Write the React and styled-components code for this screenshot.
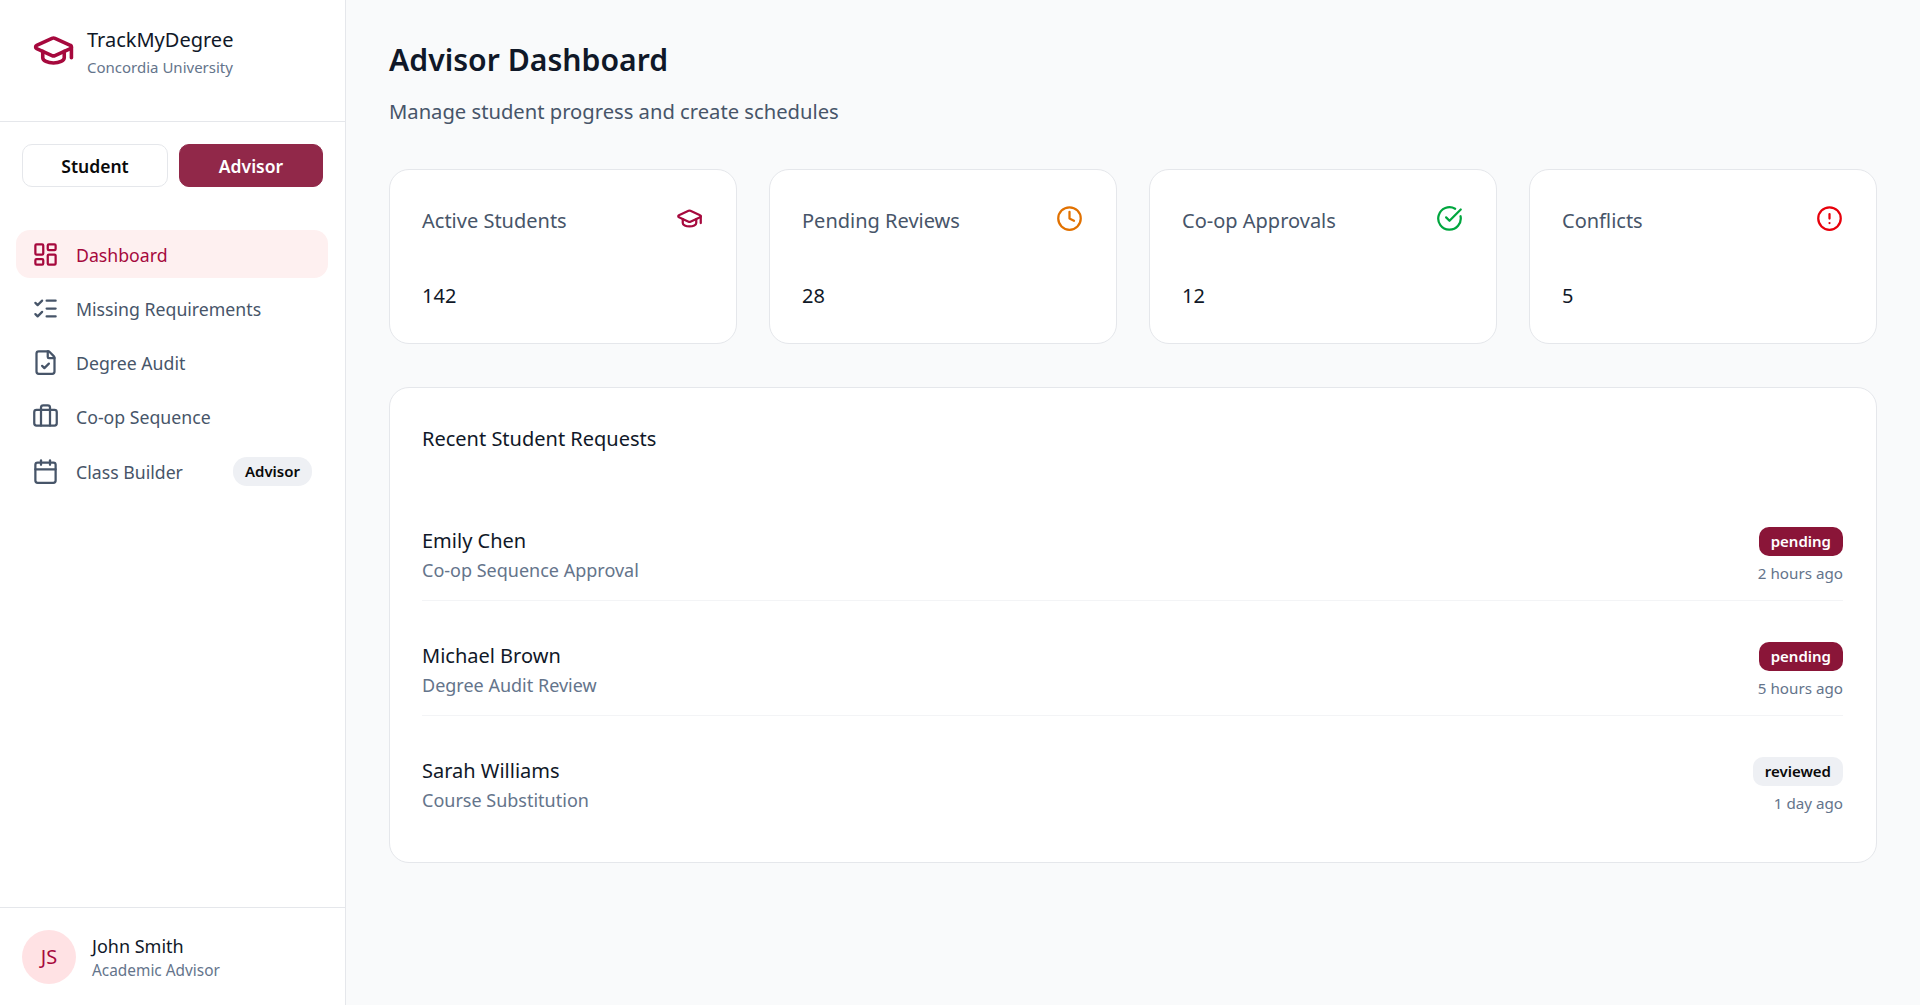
import React from 'react';
import styled, { createGlobalStyle } from 'styled-components';
import {
  GraduationCap,
  LayoutDashboard,
  ListChecks,
  FileCheck,
  Briefcase,
  Calendar,
  Clock,
  CircleCheckBig,
  CircleAlert,
} from 'lucide-react';

const GlobalStyle = createGlobalStyle`
  * {
    box-sizing: border-box;
  }

  body {
    margin: 0;
    background: #f9fafb;
    color: #0a0a0a;
    font-family: "Noto Sans", "Open Sans", sans-serif;
  }
`;

const Layout = styled.div`
  display: flex;
  height: 1005px;
  overflow: hidden;
`;

const Sidebar = styled.aside`
  width: 346px;
  flex-shrink: 0;
  display: flex;
  flex-direction: column;
  background: #fff;
  border-right: 1px solid #e5e7eb;
`;

const Brand = styled.div`
  height: 122px;
  display: flex;
  align-items: flex-start;
  gap: 12px;
  padding: 26px 32px 0;
  border-bottom: 1px solid #e5e7eb;
`;

const BrandIcon = styled.div`
  display: flex;
  padding-top: 3px;
  color: #a6093d;
`;

const BrandName = styled.div`
  font-size: 20px;
  line-height: 28px;
  color: #101828;
`;

const BrandSub = styled.div`
  margin-top: 3px;
  font-size: 15px;
  line-height: 20px;
  color: #64748b;
`;

const RoleSwitch = styled.div`
  display: grid;
  grid-template-columns: 146fr 144fr;
  gap: 11px;
  padding: 22px 22px 0;
`;

const RoleButton = styled.div`
  height: 43px;
  display: flex;
  align-items: center;
  justify-content: center;
  font-size: 17.5px;
  font-weight: 600;
  border-radius: 10px;
  color: ${({ active }) => (active ? '#fff' : '#0a0a0a')};
  background: ${({ active }) => (active ? '#912849' : '#fff')};
  border: 1px solid ${({ active }) => (active ? '#912849' : '#e5e7eb')};
`;

const Nav = styled.nav`
  flex: 1;
  display: flex;
  flex-direction: column;
  gap: 6.25px;
  padding: 43px 17px 0 16px;
`;

const NavItem = styled.div`
  height: 48px;
  display: flex;
  align-items: center;
  gap: 17px;
  padding: 0 16px;
  border-radius: 14px;
  font-size: 17.7px;
  color: ${({ active }) => (active ? '#a6093d' : '#475569')};
  background: ${({ active }) => (active ? '#fef0f0' : 'transparent')};
`;

const NavLabel = styled.span`
  flex: 1;
  padding-top: 1px;
`;

const NavBadge = styled.span`
  padding: 4px 12px;
  border-radius: 14px;
  background: #eef0f4;
  color: #0a0a0a;
  font-size: 15px;
  line-height: 21px;
  font-weight: 600;
`;

const UserBar = styled.div`
  height: 98px;
  display: flex;
  align-items: center;
  gap: 16px;
  padding: 0 22px;
  border-top: 1px solid #e5e7eb;
`;

const Avatar = styled.div`
  width: 54px;
  height: 54px;
  display: flex;
  align-items: center;
  justify-content: center;
  border-radius: 50%;
  background: #ffe2e4;
  color: #a6093d;
  font-size: 20px;
`;

const UserInfo = styled.div`
  padding-top: 2px;
`;

const UserName = styled.div`
  font-size: 18px;
  line-height: 24px;
  color: #101828;
`;

const UserRole = styled.div`
  margin-top: 2px;
  font-size: 15.4px;
  line-height: 22px;
  color: #64748b;
`;

const Main = styled.main`
  flex: 1;
  padding: 37px 43px;
`;

const Title = styled.h1`
  margin: 0;
  font-size: 30.2px;
  line-height: 45px;
  font-weight: 600;
  color: #101828;
`;

const Subtitle = styled.p`
  margin: 14px 0 0;
  font-size: 20.2px;
  line-height: 30px;
  color: #475569;
`;

const Stats = styled.section`
  display: grid;
  grid-template-columns: repeat(4, 1fr);
  gap: 32px;
  margin-top: 43px;
`;

const Card = styled.div`
  background: #fff;
  border: 1px solid #e5e7eb;
  border-radius: 20px;
`;

const StatCard = styled(Card)`
  height: 175px;
  padding: 35px 33px 0 32px;
`;

const StatHead = styled.div`
  display: flex;
  justify-content: space-between;
  align-items: flex-start;
`;

const StatLabel = styled.div`
  padding-top: 2px;
  font-size: 20px;
  line-height: 28px;
  color: #475569;
`;

const StatIcon = styled.div`
  display: flex;
  color: ${({ color }) => color};
`;

const StatValue = styled.div`
  margin-top: 47px;
  font-size: 20px;
  line-height: 28px;
  color: #101828;
`;

const RequestsCard = styled(Card)`
  height: 476px;
  margin-top: 43px;
  padding: 37px 33px 0 32px;
`;

const RequestsTitle = styled.h2`
  margin: 0 0 33px;
  font-size: 20px;
  line-height: 28px;
  font-weight: 400;
  color: #101828;
`;

const RequestRow = styled.div`
  height: 115px;
  display: flex;
  justify-content: space-between;
  padding-top: 41px;
  border-bottom: 1px solid ${({ last }) => (last ? 'transparent' : '#f3f4f6')};
`;

const RequestName = styled.div`
  font-size: 20px;
  line-height: 28px;
  color: #101828;
`;

const RequestType = styled.div`
  margin-top: 1px;
  font-size: 18px;
  line-height: 28px;
  color: #64748b;
`;

const RequestMeta = styled.div`
  display: flex;
  flex-direction: column;
  align-items: flex-end;
  gap: 5px;
`;

const StatusBadge = styled.span`
  padding: 2px 12px;
  border-radius: 10px;
  font-size: 15px;
  line-height: 25px;
  font-weight: 600;
  color: ${({ pending }) => (pending ? '#fff' : '#0a0a0a')};
  background: ${({ pending }) => (pending ? '#8a1538' : '#eef0f4')};
`;

const RequestTime = styled.div`
  font-size: 15.2px;
  line-height: 24px;
  color: #64748b;
`;

const navItems = [
  { label: 'Dashboard', Icon: LayoutDashboard, active: true },
  { label: 'Missing Requirements', Icon: ListChecks },
  { label: 'Degree Audit', Icon: FileCheck },
  { label: 'Co-op Sequence', Icon: Briefcase },
  { label: 'Class Builder', Icon: Calendar, badge: 'Advisor' },
];

const stats = [
  { label: 'Active Students', value: '142', Icon: GraduationCap, color: '#a6093d' },
  { label: 'Pending Reviews', value: '28', Icon: Clock, color: '#e17100' },
  { label: 'Co-op Approvals', value: '12', Icon: CircleCheckBig, color: '#00a63e' },
  { label: 'Conflicts', value: '5', Icon: CircleAlert, color: '#e7000b' },
];

const requests = [
  { name: 'Emily Chen', type: 'Co-op Sequence Approval', status: 'pending', time: '2 hours ago' },
  { name: 'Michael Brown', type: 'Degree Audit Review', status: 'pending', time: '5 hours ago' },
  { name: 'Sarah Williams', type: 'Course Substitution', status: 'reviewed', time: '1 day ago' },
];

export default function App() {
  return (
    <Layout>
      <GlobalStyle />
      <Sidebar>
        <Brand>
          <BrandIcon>
            <GraduationCap size={43} strokeWidth={2} />
          </BrandIcon>
          <div>
            <BrandName>TrackMyDegree</BrandName>
            <BrandSub>Concordia University</BrandSub>
          </div>
        </Brand>
        <RoleSwitch>
          <RoleButton>Student</RoleButton>
          <RoleButton active>Advisor</RoleButton>
        </RoleSwitch>
        <Nav>
          {navItems.map(({ label, Icon, active, badge }) => (
            <NavItem key={label} active={active}>
              <Icon size={27} strokeWidth={2} />
              <NavLabel>{label}</NavLabel>
              {badge && <NavBadge>{badge}</NavBadge>}
            </NavItem>
          ))}
        </Nav>
        <UserBar>
          <Avatar>JS</Avatar>
          <UserInfo>
            <UserName>John Smith</UserName>
            <UserRole>Academic Advisor</UserRole>
          </UserInfo>
        </UserBar>
      </Sidebar>
      <Main>
        <Title>Advisor Dashboard</Title>
        <Subtitle>Manage student progress and create schedules</Subtitle>
        <Stats>
          {stats.map(({ label, value, Icon, color }) => (
            <StatCard key={label}>
              <StatHead>
                <StatLabel>{label}</StatLabel>
                <StatIcon color={color}>
                  <Icon size={27} strokeWidth={2} />
                </StatIcon>
              </StatHead>
              <StatValue>{value}</StatValue>
            </StatCard>
          ))}
        </Stats>
        <RequestsCard>
          <RequestsTitle>Recent Student Requests</RequestsTitle>
          {requests.map(({ name, type, status, time }, i) => (
            <RequestRow key={name} last={i === requests.length - 1}>
              <div>
                <RequestName>{name}</RequestName>
                <RequestType>{type}</RequestType>
              </div>
              <RequestMeta>
                <StatusBadge pending={status === 'pending'}>{status}</StatusBadge>
                <RequestTime>{time}</RequestTime>
              </RequestMeta>
            </RequestRow>
          ))}
        </RequestsCard>
      </Main>
    </Layout>
  );
}
